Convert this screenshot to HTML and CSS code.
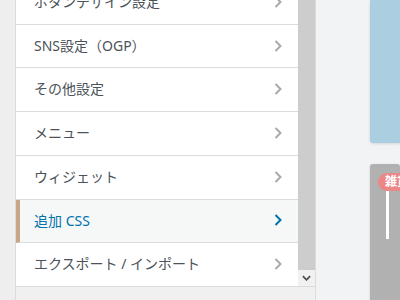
FILE: index.html
```html
<!DOCTYPE html>
<html lang="ja">
<head>
    <meta charset="UTF-8">
    <meta name="viewport" content="width=device-width, initial-scale=1.0">
    <title>カスタマイズ</title>
    <link rel="stylesheet" href="styles.css">
</head>
<body>
    <div id="sidebar">
        <div class="gutter"></div>
        <div class="controls">
            <div class="pane">
                <ul class="sections">
                    <li><span>ボタンデザイン設定</span><svg class="arrow" viewBox="0 0 8 12"><polyline points="1.5,1 6.5,6 1.5,11"/></svg></li>
                    <li><span>SNS設定（OGP）</span><svg class="arrow" viewBox="0 0 8 12"><polyline points="1.5,1 6.5,6 1.5,11"/></svg></li>
                    <li><span>その他設定</span><svg class="arrow" viewBox="0 0 8 12"><polyline points="1.5,1 6.5,6 1.5,11"/></svg></li>
                    <li><span>メニュー</span><svg class="arrow" viewBox="0 0 8 12"><polyline points="1.5,1 6.5,6 1.5,11"/></svg></li>
                    <li><span>ウィジェット</span><svg class="arrow" viewBox="0 0 8 12"><polyline points="1.5,1 6.5,6 1.5,11"/></svg></li>
                    <li class="active"><span>追加 CSS</span><svg class="arrow" viewBox="0 0 8 12"><polyline points="1.5,1 6.5,6 1.5,11"/></svg></li>
                    <li><span>エクスポート / インポート</span><svg class="arrow" viewBox="0 0 8 12"><polyline points="1.5,1 6.5,6 1.5,11"/></svg></li>
                </ul>
                <div class="scrollbar">
                    <div class="thumb"></div>
                    <div class="down"><svg viewBox="0 0 10 6"><polyline points="1,1 5,5 9,1"/></svg></div>
                </div>
            </div>
            <div class="footer"></div>
        </div>
    </div>
    <div id="preview">
        <div class="card blue"></div>
        <div class="card gray">
            <span class="badge">雑貨</span>
            <div class="bar"></div>
        </div>
    </div>
</body>
</html>
```

FILE: styles.css
```css
html,body{
    margin: 0;
    padding: 0;
}
ul{
    margin: 0;
    padding: 0;
}
li{
    list-style: none;
}
body{
    width: 400px;
    height: 300px;
    overflow: hidden;
    display: flex;
    font-family: "Noto Sans", "Noto Sans CJK JP", sans-serif;
}
#sidebar{
    display: flex;
    width: 315px;
    height: 300px;
    border-right: 1px solid #dcdcde;
}
.gutter{
    width: 15px;
    background: #eeeeee;
    border-right: 1px solid #dcdcde;
}
.controls{
    flex: 1;
    display: flex;
    flex-direction: column;
}
.pane{
    height: 286px;
    display: flex;
    overflow: hidden;
}
.sections{
    flex: 1;
    background: #fff;
    /* scrolled a little past the top */
    margin-top: -19px;
}
.sections li{
    display: flex;
    align-items: center;
    justify-content: space-between;
    padding: 10px 16px 11px 18px;
    font-size: 14px;
    line-height: 21.7px;
    color: #4b5258;
    border-bottom: 1px solid #dcdcde;
}
.sections li.active{
    background: #f6f7f7;
    border-left: 4px solid #c7a589;
    padding-left: 14px;
    color: #0073aa;
}
.arrow{
    width: 8px;
    height: 12px;
    fill: none;
    stroke: #a7aaad;
    stroke-width: 2;
}
.active .arrow{
    stroke: #0073aa;
}
.scrollbar{
    width: 17px;
    display: flex;
    flex-direction: column;
    background: #f1f1f1;
}
.thumb{
    flex: 1;
    background: #cdcdcd;
}
.down{
    height: 16px;
    display: flex;
    align-items: center;
    justify-content: center;
}
.down svg{
    width: 9px;
    height: 6px;
    fill: none;
    stroke: #505050;
    stroke-width: 2;
}
.footer{
    flex: 1;
    background: #f0f0f1;
    border-top: 1px solid #dcdcde;
}
#preview{
    flex: 1;
    background: #f2f3f5;
    padding-left: 54px;
}
.card{
    border-radius: 3px;
    box-shadow: 0 1px 3px rgba(0,0,0,0.12);
}
.blue{
    height: 143px;
    background: #abcfe1;
    border-radius: 0 0 0 3px;
}
.gray{
    position: relative;
    height: 200px;
    margin-top: 21px;
    background: #b1b1b1;
}
.badge{
    position: absolute;
    left: 8px;
    top: 9px;
    height: 18px;
    line-height: 18px;
    padding: 0 6px 0 7px;
    border-radius: 9px;
    background: #eb8787;
    color: #fff;
    font-size: 12px;
    font-weight: bold;
    white-space: nowrap;
}
.bar{
    position: absolute;
    left: 16px;
    top: 27px;
    width: 3px;
    height: 48px;
    background: #fff;
}
```
